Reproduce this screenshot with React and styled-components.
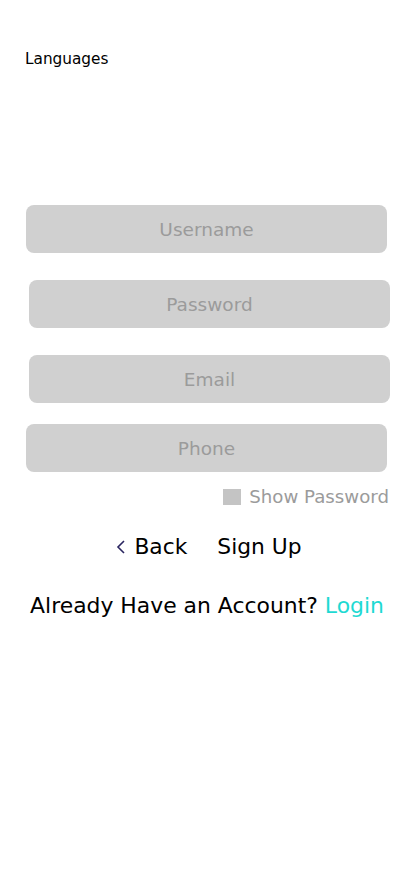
import React from "react";
import styled, { createGlobalStyle } from "styled-components";

const Global = createGlobalStyle`
  html, body { margin: 0; padding: 0; background: #fff; }
  body { font-family: "DejaVu Sans", "Noto Sans", sans-serif; }
  * { box-sizing: border-box; }
`;

const Page = styled.div`
  width: 414px;
  min-height: 896px;
  display: flex;
  flex-direction: column;
  background: #fff;
`;

const Header = styled.div`
  padding: 50px 0 0 25px;
  font-size: 15.3px;
  line-height: 18px;
  color: #000;
`;

const Form = styled.form`
  display: flex;
  flex-direction: column;
  margin-top: 137px;
`;

const Field = styled.input`
  width: 361px;
  height: 48px;
  margin-left: ${(p) => p.$x}px;
  margin-top: ${(p) => p.$gap}px;
  border: none;
  border-radius: 8px;
  background: #d0d0d0;
  font-family: inherit;
  font-size: 18.5px;
  text-align: center;
  outline: none;
  &::placeholder { color: #9b9b9b; }
`;

const ShowRow = styled.label`
  display: flex;
  align-items: center;
  justify-content: flex-end;
  gap: 8px;
  margin: 15px 25px 0 0;
  font-size: 18.2px;
  line-height: 20px;
  color: #9b9b9b;
`;

const Box = styled.span`
  width: 18px;
  height: 16px;
  background: #c4c4c4;
`;

const Actions = styled.div`
  display: flex;
  justify-content: center;
  align-items: center;
  gap: 30px;
  margin-top: 26px;
  padding-left: 4px;
  font-size: 21.8px;
  line-height: 28px;
  color: #000;
`;

const BackBtn = styled.span`
  display: flex;
  align-items: center;
  gap: 8px;
`;

const Footer = styled.p`
  margin: 31px 0 0;
  text-align: center;
  font-size: 21.9px;
  line-height: 28px;
  color: #000;
`;

const Link = styled.span`
  color: #1ed9d2;
`;

export default function App() {
  return (
    <Page>
      <Global />
      <Header>Languages</Header>
      <Form>
        <Field $x={26} $gap={0} placeholder="Username" />
        <Field $x={29} $gap={27} placeholder="Password" type="password" />
        <Field $x={29} $gap={27} placeholder="Email" />
        <Field $x={26} $gap={21} placeholder="Phone" />
        <ShowRow>
          <Box />
          Show Password
        </ShowRow>
      </Form>
      <Actions>
        <BackBtn>
          <svg width="10" height="16" viewBox="0 0 10 16">
            <path d="M8 2 L2 8 L8 14" fill="none" stroke="#2a2560" strokeWidth="1.6" />
          </svg>
          Back
        </BackBtn>
        <span>Sign Up</span>
      </Actions>
      <Footer>
        Already Have an Account? <Link>Login</Link>
      </Footer>
    </Page>
  );
}
